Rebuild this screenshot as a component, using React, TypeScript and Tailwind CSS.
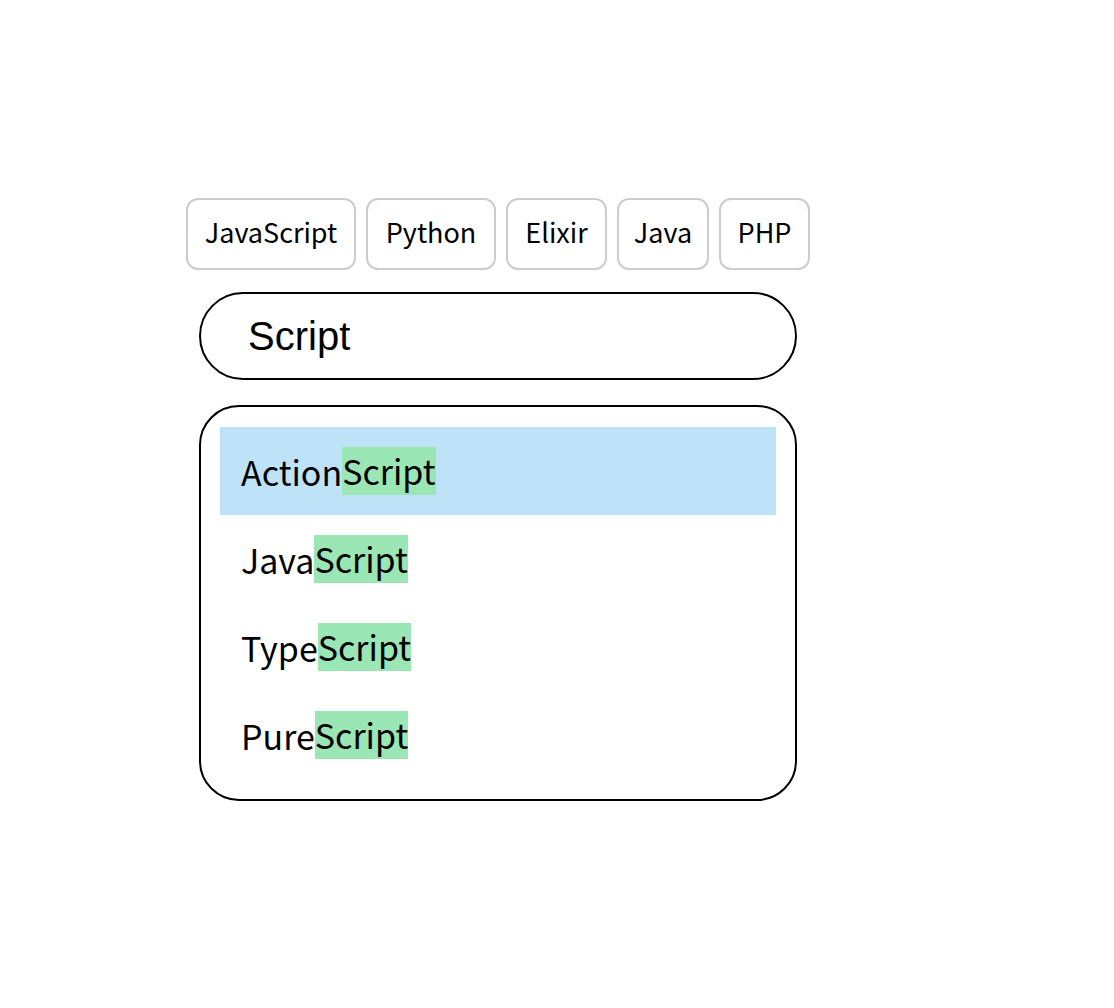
import React from 'react';

const tags = [
    { label: 'JavaScript', w: 'w-[170px]' },
    { label: 'Python', w: 'w-[130px]' },
    { label: 'Elixir', w: 'w-[101px]' },
    { label: 'Java', w: 'w-[92px]' },
    { label: 'PHP', w: 'w-[91px]' },
];
const results = [
    { prefix: 'Action', active: true },
    { prefix: 'Java', active: false },
    { prefix: 'Type', active: false },
    { prefix: 'Pure', active: false },
];

const cjk = "font-['Noto_Sans_CJK_KR',sans-serif]";

export default function App() {
    return (
        <div className="min-h-screen bg-white pt-[198px] pl-[186px]">
            <div className="w-[624px] flex flex-col">
                <div className="flex gap-[10px]">
                    {tags.map((t) => (
                        <button
                            key={t.label}
                            className={`${t.w} h-[72px] pb-[4px] rounded-[12px] border-2 border-[#cccccc] bg-white text-[27px] text-black ${cjk}`}
                        >
                            {t.label}
                        </button>
                    ))}
                </div>

                <div className="mx-[13px] mt-[22px] h-[88px] rounded-full border-2 border-black flex items-center pl-[47px]">
                    <input
                        defaultValue="Script"
                        className="w-full outline-none bg-transparent text-[40px] text-black font-['Liberation_Sans',Arial,sans-serif]"
                    />
                </div>

                <ul className="mx-[13px] mt-[25px] rounded-[40px] border-2 border-black px-[19px] pt-[20px] pb-[20px]">
                    {results.map((r) => (
                        <li
                            key={r.prefix}
                            className={`h-[88px] flex items-center pl-[21px] text-[34px] text-black ${cjk} ${r.active ? 'bg-[#bee3f8]' : ''}`}
                        >
                            <span>{r.prefix}</span>
                            <mark className="bg-[#9ae6b4] text-black leading-[48px]">Script</mark>
                        </li>
                    ))}
                </ul>
            </div>
        </div>
    );
}
